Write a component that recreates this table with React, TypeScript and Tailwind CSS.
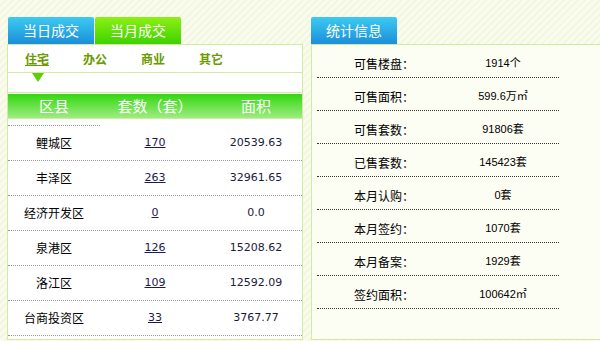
import React from 'react';

const cjk = '[font-family:"Noto_Sans_CJK_SC",sans-serif]';

const districts = [
  {name: '鲤城区', count: '170', area: '20539.63'},
  {name: '丰泽区', count: '263', area: '32961.65'},
  {name: '经济开发区', count: '0', area: '0.0'},
  {name: '泉港区', count: '126', area: '15208.62'},
  {name: '洛江区', count: '109', area: '12592.09'},
  {name: '台商投资区', count: '33', area: '3767.77'},
];

const stats = [
  {label: '可售楼盘：', value: '1914个'},
  {label: '可售面积：', value: '599.6万㎡'},
  {label: '可售套数：', value: '91806套'},
  {label: '已售套数：', value: '145423套'},
  {label: '本月认购：', value: '0套'},
  {label: '本月签约：', value: '1070套'},
  {label: '本月备案：', value: '1929套'},
  {label: '签约面积：', value: '100642㎡'},
];

function Tab({label, color}: {label: string; color: 'blue' | 'green'}) {
  const bg =
    color === 'blue'
      ? 'bg-[linear-gradient(#3ccaf2,#1b8fd8)]'
      : 'bg-[linear-gradient(#8cf014,#3fd200)]';
  return (
    <div
      className={`${bg} ${cjk} flex h-[27px] w-[86px] items-center justify-center rounded-t-[2px] text-[14px] text-white`}>
      {label}
    </div>
  );
}

function LeftPanel() {
  return (
    <div className="flex w-[296px] shrink-0 flex-col">
      <div className="ml-[1px] flex gap-[1px]">
        <Tab label="当日成交" color="blue" />
        <Tab label="当月成交" color="green" />
      </div>
      <div className="h-[296px] border border-[#d3eba0] bg-white">
        <div
          className={`${cjk} flex h-[28px] items-center gap-[34px] border-b border-[#d3eba0] pl-[17px] text-[12px] font-bold text-[#6a9a00]`}>
          <span className="underline">住宅</span>
          <span>办公</span>
          <span>商业</span>
          <span>其它</span>
        </div>
        <div className="h-[20px] border-b border-[#d3eba0] pl-[24px]">
          <svg width="12" height="9" viewBox="0 0 12 9">
            <polygon points="0,0 12,0 6,9" fill="#5ccf06" />
          </svg>
        </div>
        <div
          className={`${cjk} mt-[1px] grid h-[25px] grid-cols-[92px_110px_1fr] items-center border-b border-[#d3eba0] bg-[linear-gradient(#34d612,#9ded80)] text-center text-[15px] text-white`}>
          <span>区县</span>
          <span>套数（套）</span>
          <span>面积</span>
        </div>
        <div className="grid h-[7px] grid-cols-[92px_110px_1fr]">
          <div className="border-b border-dotted border-[#9a9a9a]" />
        </div>
        {districts.map(d => (
          <div
            key={d.name}
            className="grid h-[35px] grid-cols-[92px_110px_1fr] items-center border-b border-dotted border-[#9a9a9a] text-center">
            <span className={`${cjk} text-[12px] text-black`}>{d.name}</span>
            <span className="font-['DejaVu_Sans',sans-serif] text-[11px] text-[#1b1b4d] underline">
              {d.count}
            </span>
            <span className="font-['DejaVu_Sans',sans-serif] text-[11px] text-[#1b1b3a]">
              {d.area}
            </span>
          </div>
        ))}
      </div>
    </div>
  );
}

function RightPanel() {
  return (
    <div className="flex w-[300px] shrink-0 flex-col">
      <Tab label="统计信息" color="blue" />
      <div className="h-[296px] border border-[#d3eba0] bg-[#fcfdf3] pl-[5px]">
        {stats.map(s => (
          <div
            key={s.label}
            className="flex h-[33px] w-[242px] items-center border-b border-dotted border-[#333] pt-[5px]">
            <span className={`${cjk} w-[120px] pl-[37px] text-[12px] text-black`}>
              {s.label}
            </span>
            <span
              className={`w-[122px] pl-[10px] text-center text-[11px] text-black [font-family:"Liberation_Sans","Noto_Sans_CJK_SC",sans-serif]`}>
              {s.value}
            </span>
          </div>
        ))}
      </div>
    </div>
  );
}

export default function App() {
  return (
    <div className="h-[341px] w-[600px] overflow-hidden bg-[repeating-linear-gradient(135deg,#f9fbec_0px,#f9fbec_3px,#f3f7e2_3px,#f3f7e2_5px)]">
      <div className="flex gap-[8px] pl-[7px] pt-[17px]">
        <LeftPanel />
        <RightPanel />
      </div>
    </div>
  );
}
